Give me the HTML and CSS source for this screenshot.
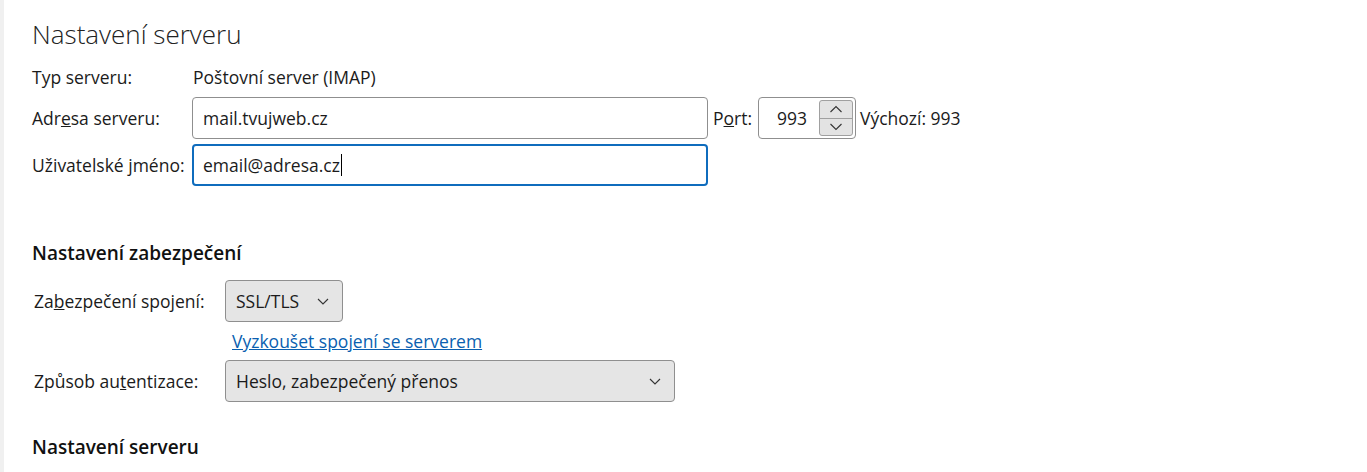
FILE: index.html
```html
<!DOCTYPE html>
<html lang="cs">
<head>
<meta charset="utf-8">
<title>Nastavení serveru</title>
<link rel="stylesheet" href="styles.css">
</head>
<body>
<div class="page">
  <h1 class="title">Nastavení serveru</h1>
  <div class="form">
    <div class="row row-type">
      <span class="label">Typ serveru:</span>
      <span class="value">Poštovní server (IMAP)</span>
    </div>
    <div class="row">
      <label class="label">Adr<u>e</u>sa serveru:</label>
      <div class="input wide">mail.tvujweb.cz</div>
      <label class="port-label">P<u>o</u>rt:</label>
      <div class="input port">
        <span class="port-val">993</span>
        <span class="spin">
          <span class="spin-btn up"><svg width="14" height="8" viewBox="0 0 14 8"><path d="M1.5 7 L7 1.5 L12.5 7" fill="none" stroke="#333" stroke-width="1.1"/></svg></span>
          <span class="spin-btn down"><svg width="14" height="8" viewBox="0 0 14 8"><path d="M1.5 1 L7 6.5 L12.5 1" fill="none" stroke="#333" stroke-width="1.1"/></svg></span>
        </span>
      </div>
      <span class="default">Výchozí: 993</span>
    </div>
    <div class="row">
      <label class="label">Uživatelské jméno:</label>
      <div class="input wide focus">email@adresa.cz<span class="caret"></span></div>
    </div>
  </div>

  <h2 class="section">Nastavení zabezpečení</h2>
  <div class="form2">
    <div class="row2">
      <label class="label2">Za<u>b</u>ezpečení spojení:</label>
      <div class="select small">SSL/TLS<svg class="chev" width="12" height="7" viewBox="0 0 12 7"><path d="M1 1 L6 6 L11 1" fill="none" stroke="#333" stroke-width="1.1"/></svg></div>
    </div>
    <div class="row-link">
      <a class="link" href="#">Vyzkoušet spojení se serverem</a>
    </div>
    <div class="row2">
      <label class="label2">Způsob au<u>t</u>entizace:</label>
      <div class="select big">Heslo, zabezpečený přenos<svg class="chev" width="12" height="7" viewBox="0 0 12 7"><path d="M1 1 L6 6 L11 1" fill="none" stroke="#333" stroke-width="1.1"/></svg></div>
    </div>
  </div>

  <h2 class="section last">Nastavení serveru</h2>
</div>
</body>
</html>
```
FILE: styles.css
```css
html, body {
  margin: 0;
  padding: 0;
  background: #ffffff;
}
body {
  font-family: "Open Sans", "Noto Sans", sans-serif;
  color: #1b1b1b;
  font-size: 17.5px;
}
.page {
  border-left: 4px solid #f0f0f0;
  min-height: 472px;
  box-sizing: border-box;
  padding: 14px 0 0 28px;
}
.title {
  margin: 0;
  font-weight: 300;
  font-size: 26px;
  line-height: 40px;
  color: #222;
}
.form {
  margin-top: 11px;
}
.row {
  display: flex;
  align-items: center;
  margin-bottom: 5px;
}
.row-type {
  height: 24px;
  margin-bottom: 8px;
}
.label {
  width: 160px;
  white-space: nowrap;
}
.value {
  padding-left: 1px;
}
.input {
  box-sizing: border-box;
  height: 42px;
  border: 1px solid #8f8f8f;
  border-radius: 4px;
  display: flex;
  align-items: center;
  padding-left: 10px;
  background: #fff;
}
.wide {
  width: 516px;
}
.focus {
  border: 2px solid #0f6cbd;
  padding-left: 9px;
}
.caret {
  display: inline-block;
  width: 1px;
  height: 22px;
  background: #000;
  margin-left: 1px;
}
.port-label {
  margin-left: 5px;
  width: 45px;
}
.port {
  width: 98px;
  padding-left: 18px;
  justify-content: space-between;
}
.spin {
  display: flex;
  flex-direction: column;
  width: 34px;
  height: 36px;
  margin-right: 2px;
  border: 1px solid #a0a0a0;
  border-radius: 3px;
  box-sizing: border-box;
  background: #e3e3e3;
  overflow: hidden;
}
.spin-btn {
  flex: 1;
  display: flex;
  align-items: center;
  justify-content: center;
}
.spin-btn.up {
  border-bottom: 1px solid #a0a0a0;
}
.default {
  margin-left: 4px;
}
.section {
  margin: 54px 0 0 0;
  font-size: 19px;
  font-weight: 600;
  line-height: 26px;
  color: #111;
}
.form2 {
  margin-top: 14px;
  padding-left: 2px;
}
.row2 {
  display: flex;
  align-items: center;
}
.label2 {
  width: 191px;
  white-space: nowrap;
}
.select {
  box-sizing: border-box;
  height: 42px;
  border: 1px solid #8f8f8f;
  border-radius: 4px;
  background: #e5e5e5;
  display: flex;
  align-items: center;
  justify-content: space-between;
  padding: 0 13px 0 10px;
}
.small {
  width: 118px;
}
.big {
  width: 450px;
}
.row-link {
  padding-left: 198px;
  height: 38px;
  display: flex;
  align-items: center;
}
.link {
  color: #0a5fb0;
  text-decoration: underline;
}
.section.last {
  margin-top: 32px;
}
```
